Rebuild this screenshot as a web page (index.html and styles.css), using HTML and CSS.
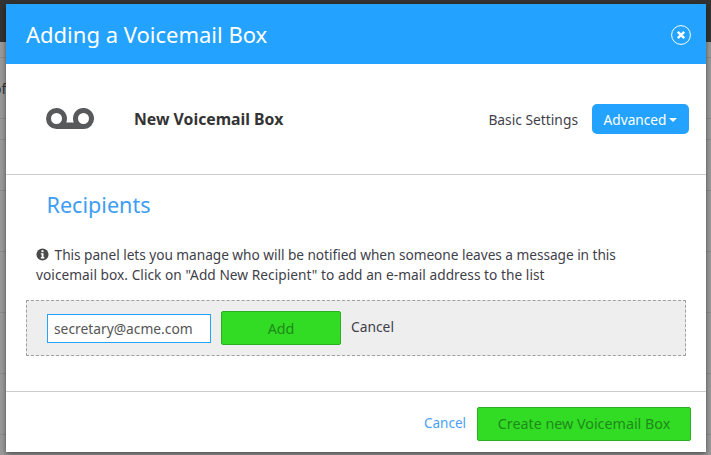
FILE: index.html
```html
<!DOCTYPE html>
<html lang="en">
<head>
<meta charset="utf-8">
<title>Adding a Voicemail Box</title>
<link rel="stylesheet" href="styles.css">
</head>
<body>
<div class="backdrop">
  <div class="topbar"></div>
  <div class="row row-a"></div>
  <div class="row row-b"><span class="row-text">of</span></div>
  <div class="row row-c"></div>
  <div class="row row-d"></div>
  <div class="row row-e"></div>
  <div class="row row-e"></div>
  <div class="row row-e"></div>
  <div class="row row-e"></div>
</div>
<section class="modal">
  <header class="modal-head">
    <h1 class="modal-title">Adding a Voicemail Box</h1>
    <svg class="close-icon" viewBox="0 0 20 20" width="20" height="20" aria-label="Close">
      <circle cx="10" cy="10" r="9.4" fill="none" stroke="#fff" stroke-width="1"/>
      <path d="M6.8 6.8l6.4 6.4M13.2 6.8l-6.4 6.4" stroke="#fff" stroke-width="2.4" fill="none"/>
    </svg>
  </header>
  <div class="summary">
    <svg class="vm-icon" viewBox="0 0 48 21" width="48" height="21" aria-hidden="true">
      <path fill="#58595b" fill-rule="evenodd" d="M10.500 0a10.500 10.500 0 0 1 9.700 14.500h7.600a10.500 10.500 0 1 1 9.700 6.500H10.500a10.500 10.500 0 0 1 0-21zM10.500 5a5.500 5.500 0 1 0 0 11a5.500 5.500 0 0 0 0-11zM37.500 5a5.500 5.500 0 1 0 0 11a5.500 5.500 0 0 0 0-11z"/>
    </svg>
    <h2 class="summary-title">New Voicemail Box</h2>
    <div class="tabs">
      <span class="tab">Basic Settings</span>
      <span class="tab-active">Advanced<i class="caret"></i></span>
    </div>
  </div>
  <div class="content">
    <h3 class="section-title">Recipients</h3>
    <p class="help">
      <svg class="info-icon" viewBox="0 0 14 14" width="13" height="13" aria-hidden="true">
        <circle cx="7" cy="7" r="6.500" fill="#4a4a4a"/>
        <rect x="5.900" y="2.400" width="2.200" height="2.100" fill="#fff"/>
        <path d="M5.200 5.600h2.900v4.200h0.900v1.400H5.200V9.800h0.900V7H5.200z" fill="#fff"/>
      </svg>
      <span class="help-first">This panel lets you manage who will be notified when someone leaves a message in this</span><br><span class="help-second">voicemail box. Click on "Add New Recipient" to add an e-mail address to the list</span>
    </p>
    <div class="add-panel">
      <input class="email" type="text" value="secretary@acme.com">
      <button class="btn btn-add" type="button">Add</button>
      <span class="inline-cancel">Cancel</span>
    </div>
  </div>
  <footer class="modal-foot">
    <a class="foot-cancel">Cancel</a>
    <button class="btn btn-create" type="button">Create new Voicemail Box</button>
  </footer>
</section>
</body>
</html>
```
FILE: styles.css
```css
* { box-sizing: border-box; }
html, body { margin: 0; height: 100%; }
body {
  width: 711px;
  height: 455px;
  overflow: hidden;
  background: #9a9a9a;
  font-family: "Noto Sans", "Open Sans", sans-serif;
  color: #3b3b3b;
  position: relative;
}
.backdrop { height: 100%; }
.topbar { height: 42px; background: #333; }
.row { border-bottom: 1px solid #8c8c8c; }
.row-a { height: 16px; }
.row-b { height: 61px; position: relative; }
.row-text { position: absolute; left: -7px; top: 21px; font-size: 14px; color: #333; }
.row-c { height: 21px; }
.row-d { height: 51px; }
.row-e { height: 61px; }

.modal {
  position: absolute;
  left: 6px;
  top: 4px;
  width: 700px;
  height: 448px;
  background: #fff;
  box-shadow: 0 2px 5px rgba(0,0,0,.5);
  display: flex;
  flex-direction: column;
}
.modal-head {
  height: 60px;
  flex: none;
  background: #23a3ff;
  display: flex;
  align-items: center;
  justify-content: space-between;
  padding: 0 15px 0 20px;
}
.modal-title {
  margin: 0 0 1px;
  font-size: 22px;
  font-weight: 400;
  color: #fff;
}
.close-icon { display: block; margin-top: 1px; }

.summary {
  height: 111px;
  flex: none;
  border-bottom: 1px solid #ccc;
  display: flex;
  align-items: center;
  padding: 0 17px 0 40px;
}
.vm-icon { display: block; flex: none; margin-top: -2px; }
.summary-title {
  margin: 0 0 0 40px;
  font-size: 15.800px;
  font-weight: 700;
  color: #333;
}
.tabs { margin-left: auto; display: flex; align-items: center; gap: 14px; }
.tab { font-size: 13.800px; color: #3f3f4a; }
.tab-active {
  width: 97px;
  height: 30px;
  border-radius: 5px;
  background: #23a3ff;
  color: #fff;
  font-size: 13.700px;
  display: flex;
  align-items: center;
  justify-content: center;
  padding-top: 1px;
}
.caret {
  margin-left: 3px;
  border-left: 4px solid transparent;
  border-right: 4px solid transparent;
  border-top: 4px solid #fff;
}

.content {
  flex: 1;
  padding: 0 20px;
}
.section-title {
  margin: 15px 0 0 20.500px;
  font-size: 21.600px;
  line-height: 29px;
  font-weight: 400;
  color: #3d9df2;
}
.help {
  margin: 26px 0 0 10px;
  font-size: 13.700px;
  line-height: 20px;
  color: #3f3f4a;
}
.help-first { letter-spacing: -0.045px; margin-left: 1px; }
.help-second { letter-spacing: 0.04px; }
.info-icon { vertical-align: -1px; margin-right: 1px; }
.add-panel {
  margin-top: 15px;
  width: 660px;
  height: 56px;
  border: 1px dashed #a0a0a0;
  background: #eee;
  display: flex;
  align-items: center;
  padding: 0 20px;
}
.email {
  width: 164px;
  height: 29px;
  border: 1px solid #23a3ff;
  background: #fff;
  padding: 0 6px;
  font: 13.800px "Noto Sans", "Open Sans", sans-serif;
  color: #555;
  outline: none;
}
.btn {
  border: 1px solid #2ab022;
  border-radius: 2px;
  background: #32dc24;
  color: #1e8a1a;
  font-family: "Noto Sans", "Open Sans", sans-serif;
  font-size: 14.300px;
  padding: 0;
}
.btn-add { margin-left: 10px; width: 120px; height: 34px; }
.inline-cancel { margin-left: 10px; font-size: 13.800px; color: #3f3f4a; margin-top: -4px; }

.modal-foot {
  height: 61px;
  flex: none;
  border-top: 1px solid #ccc;
  display: flex;
  align-items: center;
  justify-content: flex-end;
  padding: 3px 15px 0 0;
  gap: 11px;
}
.foot-cancel { font-size: 13.500px; color: #4a9ff5; margin-top: -2px; }
.btn-create { width: 214px; height: 34px; }
```
